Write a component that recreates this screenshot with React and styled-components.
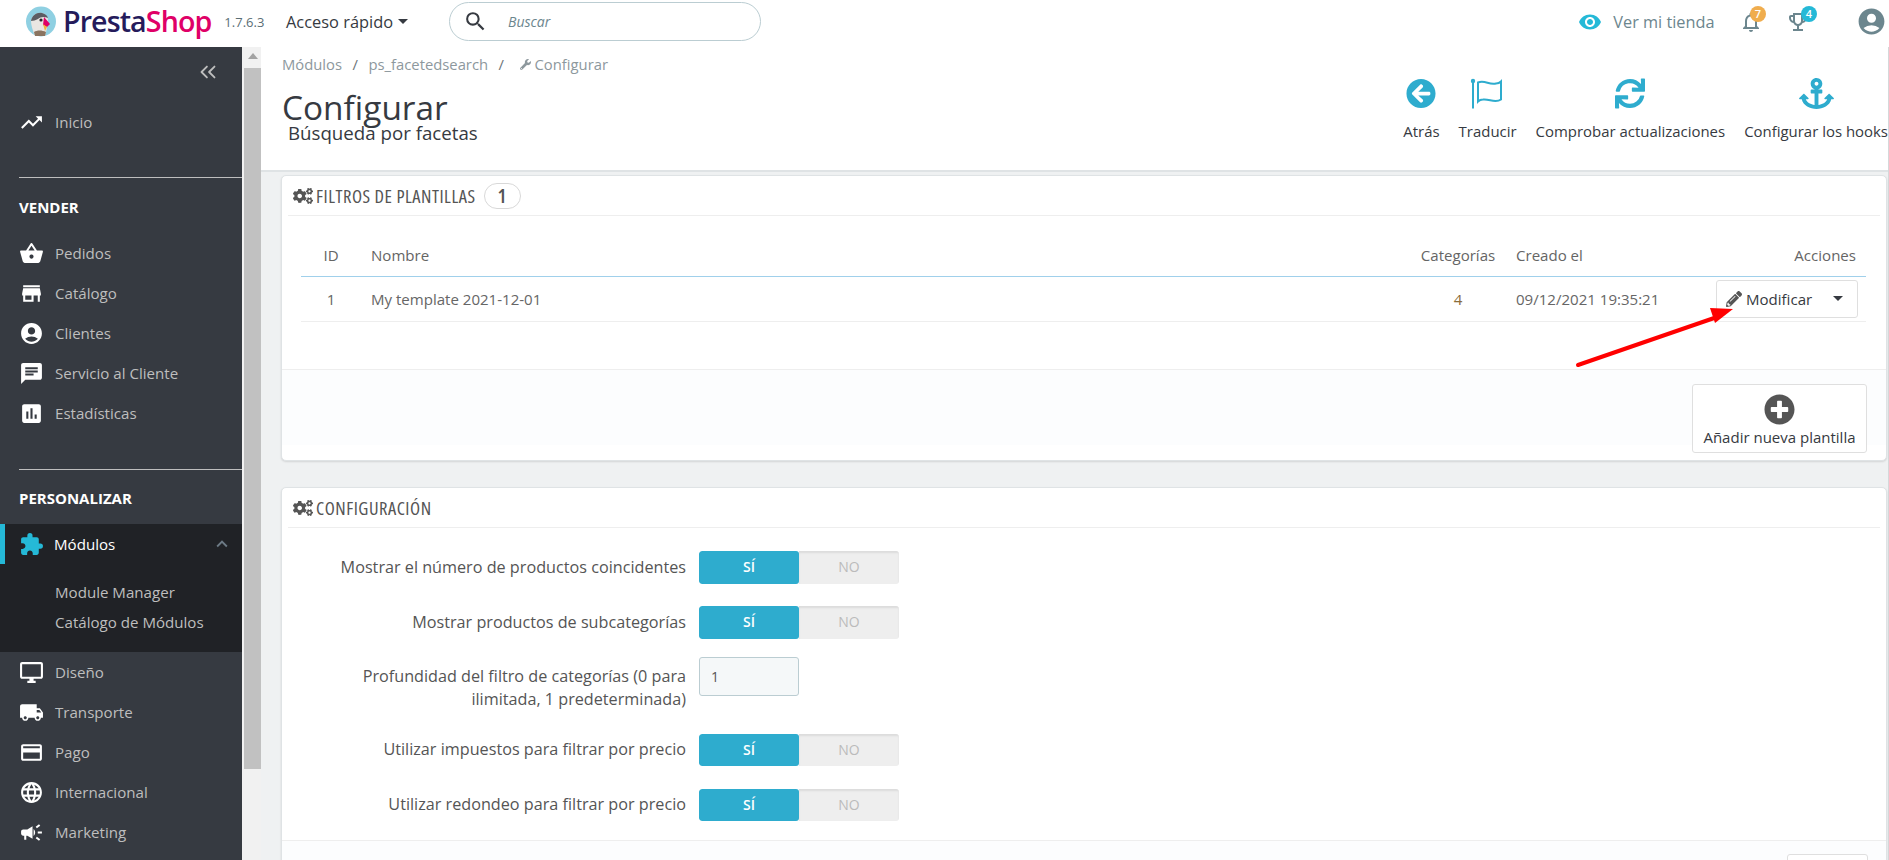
import React from "react";
import styled, { createGlobalStyle } from "styled-components";
import { FaAnchor, FaArrowCircleLeft, FaCogs, FaPencilAlt, FaPlusCircle, FaSync, FaWrench } from "react-icons/fa";
import {
  MdAccountCircle,
  MdAssessment,
  MdCampaign,
  MdChat,
  MdExpandLess,
  MdExtension,
  MdLanguage,
  MdLocalShipping,
  MdNotificationsNone,
  MdOutlineDesktopWindows,
  MdOutlineEmojiEvents,
  MdPayment,
  MdSearch,
  MdShoppingBasket,
  MdStore,
  MdTrendingUp,
  MdVisibility,
} from "react-icons/md";
import { ChevronsLeft } from "lucide-react";

const GlobalStyle = createGlobalStyle`
  html, body {
    margin: 0;
    height: 100%;
    overflow: hidden;
    background: #fff;
    font-family: "Open Sans", "Liberation Sans", sans-serif;
  }
  * { box-sizing: border-box; }
`;

const Page = styled.div`
  width: 1889px;
  height: 860px;
  display: flex;
  flex-direction: column;
  overflow: hidden;
`;

/* top bar */
const TopBar = styled.header`
  height: 47px;
  flex: none;
  padding-bottom: 4px;
  display: flex;
  align-items: center;
  background: #fff;
`;
const LogoBox = styled.div`
  width: 286px;
  padding-left: 26px;
  display: flex;
  align-items: center;
`;
const LogoText = styled.span`
  margin-left: 7px;
  font-family: "Open Sans", sans-serif;
  font-size: 28.6px;
  font-weight: 600;
  letter-spacing: -0.9px;
  line-height: 1;
  color: #251b5b;
  & > b {
    font-weight: 600;
    color: #df0067;
  }
`;
const Version = styled.span`
  margin-left: 13px;
  font-size: 13px;
  color: #5a6e75;
`;
const QuickAccess = styled.div`
  width: 163px;
  display: flex;
  align-items: center;
  font-size: 16.4px;
  color: #363a41;
`;
const Caret = styled.i`
  display: inline-block;
  margin-left: ${(p) => p.$ml ?? 5}px;
  border-left: 5px solid transparent;
  border-right: 5px solid transparent;
  border-top: 5px solid ${(p) => p.$color || "#363a41"};
`;
const SearchBox = styled.div`
  width: 312px;
  height: 39px;
  padding-left: 13px;
  display: flex;
  align-items: center;
  border: 1px solid #bbcdd2;
  border-radius: 20px;
  color: #363a41;
  font-size: 14px;
  & > em {
    margin-left: 20px;
    color: #6c868e;
  }
`;
const TopRight = styled.div`
  margin-left: auto;
  display: flex;
  align-items: center;
`;
const StoreLink = styled.div`
  display: flex;
  align-items: center;
  gap: 11px;
  margin-right: 24px;
  font-size: 16.3px;
  color: #6c868e;
  & > svg {
    color: #25b9d7;
  }
`;
const Notice = styled.div`
  position: relative;
  width: 24px;
  height: 24px;
  margin-right: ${(p) => p.$mr}px;
  color: #6c868e;
`;
const Badge = styled.span`
  position: absolute;
  top: -4px;
  left: ${(p) => p.$left}px;
  width: 16px;
  height: 16px;
  border-radius: 50%;
  background: ${(p) => p.$bg};
  color: #fff;
  font-size: 11px;
  font-weight: 600;
  line-height: 16px;
  text-align: center;
`;
const Account = styled.div`
  margin-right: 2px;
  display: flex;
  color: #6c868e;
`;

/* sidebar */
const Body = styled.div`
  flex: 1;
  min-height: 0;
  display: flex;
`;
const Sidebar = styled.nav`
  width: 242px;
  flex: none;
  background: #363a41;
  color: #bebebe;
`;
const Collapse = styled.div`
  height: 55px;
  padding: 12px 21px 0 0;
  display: flex;
  justify-content: flex-end;
  color: #bebebe;
`;
const Item = styled.div`
  height: 40px;
  padding-left: 19px;
  display: flex;
  align-items: center;
  gap: 11px;
  font-size: 15.1px;
  & > svg {
    flex: none;
    color: #fff;
  }
`;
const NavGroup = styled.div`
  margin-bottom: ${(p) => p.$mb || 0}px;
`;
const Rule = styled.hr`
  margin: 0 0 0 19px;
  border: 0;
  border-top: 1px solid #bebebe;
`;
const SectionTitle = styled.div`
  height: ${(p) => p.$h}px;
  padding: ${(p) => p.$pt}px 0 0 19px;
  color: #fff;
  font-size: 15px;
  font-weight: 700;
  line-height: 20px;
`;
const ActiveGroup = styled.div`
  height: 128px;
  background: #202226;
`;
const ActiveItem = styled(Item)`
  padding-left: 14px;
  gap: 10px;
  border-left: 5px solid #25b9d7;
  color: #fff;
  & > svg:first-child {
    color: #25b9d7;
  }
  & > svg:last-child {
    margin-left: auto;
    margin-right: 9px;
    color: #6c7a85;
  }
`;
const SubList = styled.div`
  padding: 13px 0 0 55px;
  font-size: 15.1px;
  line-height: 30px;
`;
const SideTrack = styled.div`
  width: 19px;
  flex: none;
  padding: 21px 0 0 2px;
  background: #f1f1f1;
`;
const SideThumb = styled.div`
  position: relative;
  height: 701px;
  background: #c1c1c1;
  &::before {
    content: "";
    position: absolute;
    top: -15px;
    left: 4px;
    border-left: 5px solid transparent;
    border-right: 5px solid transparent;
    border-bottom: 6px solid #a3a3a3;
  }
`;

/* main column */
const Main = styled.main`
  flex: 1;
  min-width: 0;
  background: #eff1f2;
  border-right: 1px solid #d5d8da;
`;
const Header = styled.div`
  height: 125px;
  padding: 7px 0 0 21px;
  display: flex;
  justify-content: space-between;
  background: #fff;
  border-bottom: 2px solid #dfe3e5;
`;
const Crumbs = styled.div`
  height: 20px;
  display: flex;
  align-items: center;
  font-size: 14.8px;
  color: #8d989d;
  & > i {
    margin: 0 10.5px;
    font-style: normal;
    color: #6c7479;
  }
  & > svg {
    margin: 0 4px 0 5px;
  }
`;
const PageTitle = styled.h1`
  margin: 13px 0 0;
  font-size: 33.4px;
  font-weight: 400;
  line-height: 40px;
  color: #363a41;
`;
const SubTitle = styled.h2`
  margin: -6.5px 0 0 6px;
  font-size: 18.7px;
  font-weight: 400;
  line-height: 24px;
  color: #363a41;
`;
const Tools = styled.div`
  display: flex;
  gap: 19px;
  padding-top: 22px;
`;
const Tool = styled.div`
  display: flex;
  flex-direction: column;
  align-items: center;
  font-size: 14.95px;
  color: #363a41;
  white-space: nowrap;
  & > svg {
    height: 35px;
    margin-bottom: 10px;
    color: #2eacce;
  }
`;
const Cards = styled.div`
  padding: 3px 1px 0 20px;
`;
const Card = styled.section`
  height: ${(p) => p.$h}px;
  margin-bottom: 26px;
  background: #fff;
  border: 1px solid #dfe3e5;
  border-radius: 5px;
  box-shadow: 0 1px 2px rgba(0, 0, 0, 0.12);
  overflow: hidden;
`;
const CardHead = styled.div`
  height: 40px;
  margin: 0 6px;
  padding-left: 5px;
  display: flex;
  align-items: center;
  border-bottom: 1px solid #eee;
  font-size: 18.5px;
  font-stretch: 75%;
  letter-spacing: 0.52px;
  color: #555;
  & > svg {
    margin-right: 3px;
  }
`;
const Count = styled.span`
  width: 37px;
  height: 26px;
  margin-left: 8px;
  border: 1px solid #d8d8d8;
  border-radius: 13px;
  text-align: center;
  font-size: 20px;
  font-weight: 600;
  letter-spacing: 0;
  line-height: 24px;
`;
const Table = styled.table`
  width: 1565px;
  margin: 19px 0 0 19px;
  border-collapse: collapse;
  table-layout: fixed;
  font-size: 15.05px;
  color: #666;
`;
const Th = styled.th`
  height: 41px;
  padding: ${(p) => p.$pad || "0 10px"};
  border-bottom: 1px solid #a0d0eb;
  font-weight: 400;
  text-align: ${(p) => p.$align || "left"};
  color: #656565;
`;
const Td = styled.td`
  height: 45px;
  padding: ${(p) => p.$pad || "0 10px"};
  border-bottom: 1px solid #eee;
  text-align: ${(p) => p.$align || "left"};
  color: ${(p) => p.$color || "#666"};
`;
const SplitButton = styled.div`
  width: 142px;
  height: 38px;
  margin-left: auto;
  padding: 0 14px 0 9px;
  display: flex;
  align-items: center;
  border: 1px solid #dfdfdf;
  border-radius: 3px;
  color: #363a41;
  & > svg {
    margin-right: 4px;
    color: #555;
  }
  & > i {
    margin-left: auto;
  }
`;
const CardFooter = styled.div`
  height: 76px;
  margin-top: 47px;
  padding: 14px 19px 0 0;
  display: flex;
  justify-content: flex-end;
  background: #fcfdfe;
  border-top: 1px solid #eee;
`;
const AddButton = styled.div`
  width: 175px;
  height: 69px;
  padding-top: 9px;
  display: flex;
  flex-direction: column;
  align-items: center;
  gap: 2px;
  background: #fff;
  border: 1px solid #dfdfdf;
  border-radius: 3px;
  font-size: 15px;
  color: #363a41;
  & > svg {
    color: #555;
  }
`;
const Form = styled.div`
  padding: 23px 0 0 29px;
`;
const Row = styled.div`
  display: flex;
  align-items: ${(p) => (p.$tall ? "flex-start" : "center")};
  margin-bottom: ${(p) => p.$mb}px;
`;
const Label = styled.label`
  width: 375px;
  margin-right: 13px;
  padding-top: ${(p) => (p.$tall ? 8 : 0)}px;
  text-align: right;
  font-size: 16.2px;
  line-height: 23px;
  color: #555;
`;
const Switch = styled.div`
  width: 200px;
  height: 32.5px;
  display: flex;
  border-radius: 3px;
  overflow: hidden;
  font-size: 14px;
  line-height: 32.5px;
  text-align: center;
`;
const SwitchOn = styled.span`
  flex: 1;
  background: #2eacce;
  color: #fff;
  font-weight: 600;
  border-radius: 3px;
`;
const SwitchOff = styled.span`
  flex: 1;
  background: #eee;
  box-shadow: inset 0 2px 2px rgba(0, 0, 0, 0.08);
  color: #bbb;
`;
const NumberBox = styled.div`
  width: 100px;
  height: 39px;
  padding-left: 11px;
  background: #f5f8f9;
  border: 1px solid #bbcdd2;
  border-radius: 3px;
  font-size: 14px;
  line-height: 37px;
  color: #555;
`;
const FormFooter = styled.div`
  margin-top: 18.5px;
  padding: 13px 18px 0 0;
  display: flex;
  justify-content: flex-end;
  background: #fcfdfe;
  border-top: 1px solid #eee;
  height: 60px;
`;
const SaveButton = styled.div`
  width: 81px;
  height: 60px;
  background: #fff;
  border: 1px solid #dfdfdf;
  border-radius: 3px;
`;
const Pointer = styled.svg`
  position: absolute;
  left: 1570px;
  top: 300px;
`;

const Logo = () => (
  <svg width="30" height="31" viewBox="0 0 30 31">
    <circle cx="15" cy="15.5" r="15" fill="#8fd0e2" />
    <path d="M5 15c1-6 6-9 11-8 4 1 6 4 6 8-1 5-1 9-3 14-4 1-8 1-11-1-1-4-3-8-3-13z" fill="#e9e6e2" />
    <path d="M5 15c1-6 6-9 11-8 3 1 5 2 6 5-4-2-8-1-10 1-2 1-5 2-7 2z" fill="#5c5c62" />
    <circle cx="15" cy="14" r="1.6" fill="#2a2a2e" />
    <path d="M18 11l6 7-3 3-4-2z" fill="#df0067" />
    <path d="M17 18l4 3-2 4z" fill="#f4b23c" />
    <path d="M8 26c3-2 8-2 12 0l-1 4H9z" fill="#8a7460" />
  </svg>
);

const FlagIcon = () => (
  <svg width="36" height="34" viewBox="0 0 36 34" fill="none" stroke="currentColor">
    <circle cx="3" cy="4.5" r="2.2" fill="currentColor" stroke="none" />
    <path d="M3 5v27" strokeWidth="2" />
    <path d="M8 6c7-3 11 3 18 1 2 0 4-1 5-2v18c-6 4-12-1-18 0-2 0-4 1-5 2z" strokeWidth="2" />
  </svg>
);

const homeItems = [[MdTrendingUp, "Inicio"]];
const sellItems = [
  [MdShoppingBasket, "Pedidos"],
  [MdStore, "Catálogo"],
  [MdAccountCircle, "Clientes"],
  [MdChat, "Servicio al Cliente"],
  [MdAssessment, "Estadísticas"],
];
const designItems = [
  [MdOutlineDesktopWindows, "Diseño"],
  [MdLocalShipping, "Transporte"],
  [MdPayment, "Pago"],
  [MdLanguage, "Internacional"],
  [MdCampaign, "Marketing"],
];

const NavItems = ({ items }) =>
  items.map(([Icon, label]) => (
    <Item key={label}>
      <Icon size={25} />
      {label}
    </Item>
  ));

const YesNo = () => (
  <Switch>
    <SwitchOn>SÍ</SwitchOn>
    <SwitchOff>NO</SwitchOff>
  </Switch>
);

export default function App() {
  return (
    <Page>
      <GlobalStyle />
      <TopBar>
        <LogoBox>
          <Logo />
          <LogoText>
            Presta<b>Shop</b>
          </LogoText>
          <Version>1.7.6.3</Version>
        </LogoBox>
        <QuickAccess>
          Acceso rápido
          <Caret />
        </QuickAccess>
        <SearchBox>
          <MdSearch size={25} />
          <em>Buscar</em>
        </SearchBox>
        <TopRight>
          <StoreLink>
            <MdVisibility size={24} />
            Ver mi tienda
          </StoreLink>
          <Notice $mr={23.5}>
            <MdNotificationsNone size={24} />
            <Badge $left={11.5} $bg="#f0ad4e">7</Badge>
          </Notice>
          <Notice $mr={46}>
            <MdOutlineEmojiEvents size={24} />
            <Badge $left={15} $bg="#25b9d7">4</Badge>
          </Notice>
          <Account>
            <MdAccountCircle size={31} />
          </Account>
        </TopRight>
      </TopBar>
      <Body>
        <Sidebar>
          <Collapse>
            <ChevronsLeft size={26} strokeWidth={1.7} />
          </Collapse>
          <NavGroup $mb={35}>
            <NavItems items={homeItems} />
          </NavGroup>
          <Rule />
          <SectionTitle $h={55} $pt={19}>VENDER</SectionTitle>
          <NavGroup $mb={36}>
            <NavItems items={sellItems} />
          </NavGroup>
          <Rule />
          <SectionTitle $h={54} $pt={18}>PERSONALIZAR</SectionTitle>
          <ActiveGroup>
            <ActiveItem>
              <MdExtension size={25} />
              Módulos
              <MdExpandLess size={22} />
            </ActiveItem>
            <SubList>
              <div>Module Manager</div>
              <div>Catálogo de Módulos</div>
            </SubList>
          </ActiveGroup>
          <NavItems items={designItems} />
        </Sidebar>
        <SideTrack>
          <SideThumb />
        </SideTrack>
        <Main>
          <Header>
            <div>
              <Crumbs>
                Módulos<i>/</i>ps_facetedsearch<i>/</i>
                <FaWrench size={11} />
                Configurar
              </Crumbs>
              <PageTitle>Configurar</PageTitle>
              <SubTitle>Búsqueda por facetas</SubTitle>
            </div>
            <Tools>
              <Tool>
                <FaArrowCircleLeft size={30} />
                Atrás
              </Tool>
              <Tool>
                <FlagIcon />
                Traducir
              </Tool>
              <Tool>
                <FaSync size={30} />
                Comprobar actualizaciones
              </Tool>
              <Tool>
                <FaAnchor size={35} />
                Configurar los hooks
              </Tool>
            </Tools>
          </Header>
          <Cards>
            <Card $h={286}>
              <CardHead>
                <FaCogs size={20} />
                FILTROS DE PLANTILLAS
                <Count>1</Count>
              </CardHead>
              <Table>
                <colgroup>
                  <col width="60" />
                  <col />
                  <col width="94" />
                  <col width="195" />
                  <col width="166" />
                </colgroup>
                <thead>
                  <tr>
                    <Th $align="center" $pad="0">ID</Th>
                    <Th>Nombre</Th>
                    <Th $align="center" $pad="0">Categorías</Th>
                    <Th $pad="0 0 0 11px">Creado el</Th>
                    <Th $align="right">Acciones</Th>
                  </tr>
                </thead>
                <tbody>
                  <tr>
                    <Td $align="center" $pad="0">1</Td>
                    <Td>My template 2021-12-01</Td>
                    <Td $align="center" $pad="0" $color="#8a6d3b">4</Td>
                    <Td $pad="0 0 0 11px">09/12/2021 19:35:21</Td>
                    <Td $pad="0 8px 0 0">
                      <SplitButton>
                        <FaPencilAlt size={16} />
                        Modificar
                        <Caret $ml={0} />
                      </SplitButton>
                    </Td>
                  </tr>
                </tbody>
              </Table>
              <CardFooter>
                <AddButton>
                  <FaPlusCircle size={31} />
                  Añadir nueva plantilla
                </AddButton>
              </CardFooter>
            </Card>
            <Card $h={420}>
              <CardHead>
                <FaCogs size={20} />
                CONFIGURACIÓN
              </CardHead>
              <Form>
                <Row $mb={22.5}>
                  <Label>Mostrar el número de productos coincidentes</Label>
                  <YesNo />
                </Row>
                <Row $mb={18.5}>
                  <Label>Mostrar productos de subcategorías</Label>
                  <YesNo />
                </Row>
                <Row $tall $mb={22.5}>
                  <Label $tall>Profundidad del filtro de categorías (0 para ilimitada, 1 predeterminada)</Label>
                  <NumberBox>1</NumberBox>
                </Row>
                <Row $mb={22.5}>
                  <Label>Utilizar impuestos para filtrar por precio</Label>
                  <YesNo />
                </Row>
                <Row $mb={0}>
                  <Label>Utilizar redondeo para filtrar por precio</Label>
                  <YesNo />
                </Row>
              </Form>
              <FormFooter>
                <SaveButton />
              </FormFooter>
            </Card>
          </Cards>
        </Main>
      </Body>
      <Pointer width="170" height="75" viewBox="0 0 170 75">
        <path d="M8 65L150 16" stroke="#f00" strokeWidth="4" strokeLinecap="round" />
        <path d="M163 9L140 8L145 23z" fill="#f00" />
      </Pointer>
    </Page>
  );
}
